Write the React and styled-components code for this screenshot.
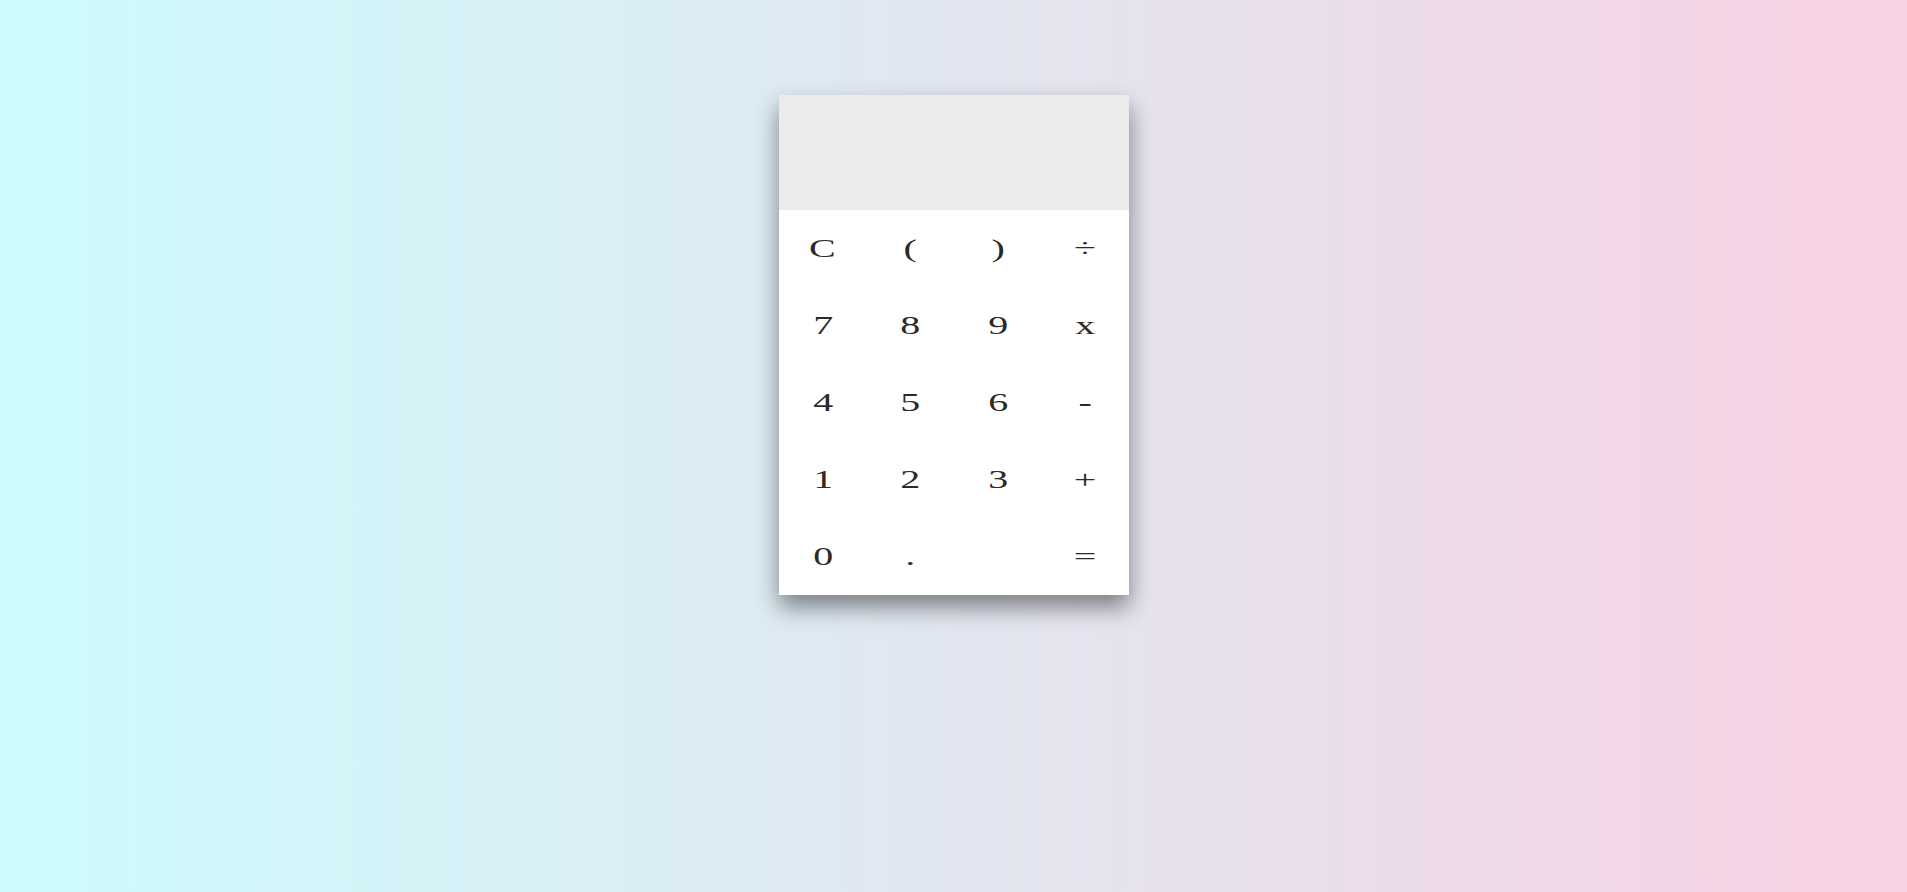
import React, { useState } from 'react';
import styled, { createGlobalStyle } from 'styled-components';

const GlobalStyle = createGlobalStyle`
  html, body {
    margin: 0;
    padding: 0;
    height: 100%;
  }
  body {
    background: linear-gradient(to right, #ccfcfd, #f8d1e4);
    font-family: "Liberation Serif", serif;
  }
`;

const Page = styled.div`
  min-height: 892px;
  display: flex;
  justify-content: center;
  align-items: flex-start;
  padding-top: 95px;
  box-sizing: border-box;
`;

const Calculator = styled.div`
  width: 350px;
  background: #fff;
  box-shadow: 0 12px 22px rgba(0, 0, 0, 0.45);
`;

const Display = styled.div`
  height: 115px;
  background: #eceaed;
  display: flex;
  align-items: flex-end;
  justify-content: flex-end;
  padding: 0 16px 12px;
  box-sizing: border-box;
  font-size: 32px;
  color: #222;
`;

const Keypad = styled.div`
  display: grid;
  grid-template-columns: repeat(4, 1fr);
  grid-auto-rows: 77px;
`;

const Key = styled.button`
  border: none;
  background: transparent;
  padding: 0 0 0 1px;
  font-family: "Liberation Serif", serif;
  font-size: 25px;
  color: #2a2a2a;
  cursor: pointer;
  display: flex;
  align-items: center;
  justify-content: center;

  span {
    display: inline-block;
    transform: scaleX(1.6);
  }
`;

const keys = ['C', '(', ')', '÷', '7', '8', '9', 'x', '4', '5', '6', '-', '1', '2', '3', '+', '0', '.', '', '='];

export default function App() {
  const [value, setValue] = useState('');

  const press = (k) => {
    if (k === 'C') return setValue('');
    if (k === '=') return;
    setValue((v) => v + k);
  };

  return (
    <>
      <GlobalStyle />
      <Page>
        <Calculator>
          <Display>{value}</Display>
          <Keypad>
            {keys.map((k, i) => (
              <Key key={i} onClick={() => press(k)}>
                <span>{k}</span>
              </Key>
            ))}
          </Keypad>
        </Calculator>
      </Page>
    </>
  );
}
